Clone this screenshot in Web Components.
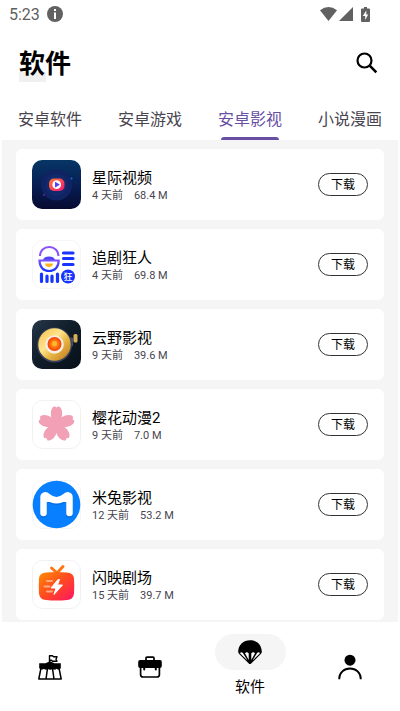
<!DOCTYPE html>
<html lang="zh-CN">
<head>
<meta charset="utf-8">
<meta name="viewport" content="width=device-width, initial-scale=1">
<title>软件</title>
<style>
    body {
        margin: 0;
        height: 100vh;
        display: flex;
        flex-direction: column;
        background: #fff;
        color: #000;
        font-family: Roboto, "Noto Sans CJK SC", sans-serif;
        --muted: #49454f;
        --accent: #6750a4;
        --surface: #f5f5f5;
    }
    main {
        flex: 1;
        min-height: 0;
        margin: 0 2px;
        padding: 9px 14px 0;
        display: flex;
        flex-direction: column;
        gap: 9px;
        overflow: hidden auto;
        scrollbar-width: none;
        background: var(--surface);
    }
</style>
</head>
<body>
<status-bar>5:23</status-bar>
<top-bar>软件</top-bar>
<tab-strip>
    <tab-item>安卓软件</tab-item>
    <tab-item>安卓游戏</tab-item>
    <tab-item active>安卓影视</tab-item>
    <tab-item>小说漫画</tab-item>
</tab-strip>
<main>
    <app-card age="4 天前" size="68.4 M">
        <svg slot="icon" viewBox="0 0 49 49">
            <defs>
                <linearGradient id="navy" x2="0" y2="1"><stop stop-color="#063665"/><stop offset=".5" stop-color="#071f55"/><stop offset="1" stop-color="#070a31"/></linearGradient>
                <linearGradient id="lens" x2="1" y2="1"><stop stop-color="#ff7a2d"/><stop offset="1" stop-color="#f51578"/></linearGradient>
            </defs>
            <rect width="49" height="49" rx="10" fill="url(#navy)"/>
            <circle cx="24.500" cy="25" r="15.500" fill="#102463"/>
            <circle cx="24.500" cy="25" r="11" fill="#12296c"/>
            <circle cx="39.500" cy="18.500" r="1" fill="#2469d8"/>
            <circle cx="12" cy="35" r="1.200" fill="#49208c"/>
            <rect x="17" y="18.500" width="15.500" height="12.500" rx="5" fill="url(#lens)"/>
            <circle cx="24.700" cy="24.700" r="4.400" fill="#fff"/>
            <path d="M23 22.300q0-.6.6-.3l3.700 2.200q.7.4 0 .8l-3.700 2.300q-.6.3-.6-.3z" fill="#5840f2"/>
        </svg>
        星际视频
    </app-card>
    <app-card age="4 天前" size="69.8 M">
        <svg slot="icon" viewBox="0 0 49 49">
            <defs><linearGradient id="hat" x2="0" y2="1"><stop stop-color="#7a50ff"/><stop offset="1" stop-color="#1834ff"/></linearGradient></defs>
            <rect x=".5" y=".5" width="48" height="48" rx="10" fill="#fff" stroke="#f5f5f5"/>
            <path d="M8 16c0-5.500 4-9 9.200-9s9.200 3.500 9.200 9" fill="none" stroke="#8a52ff" stroke-width="2"/>
            <path d="M11 20c.5-2.500 3-3.500 6-3.500s5.500 1 6 3.500z" fill="#5042f5"/>
            <path d="M7.500 20.500h19.200c0 6.500-4 10.500-9.600 10.500s-9.600-4-9.600-10.500z" fill="#fff" stroke="url(#hat)" stroke-width="2.200"/>
            <path d="M13 23.500h8q-.5 3.500-4 3.500t-4-3.500z" fill="#ffb21d"/>
            <path d="M31.500 13h9.500M31.500 18.500h9.500M31.500 24.500h9.500" fill="none" stroke="#1834ff" stroke-width="3.200" stroke-linecap="round"/>
            <path d="M9.500 34v7.500M15 36v5.500M20 36v5.500M25.500 34v7.500" fill="none" stroke="#1834ff" stroke-width="3.200" stroke-linecap="round"/>
            <circle cx="36" cy="36.500" r="7" fill="#1834ff"/>
            <text x="36" y="40" text-anchor="middle" font-size="9" font-weight="500" fill="#fff">狂</text>
        </svg>
        追剧狂人
    </app-card>
    <app-card age="9 天前" size="39.6 M">
        <svg slot="icon" viewBox="0 0 49 49">
            <defs>
                <linearGradient id="deck" x2="1" y2="1"><stop stop-color="#26384a"/><stop offset=".45" stop-color="#111d2a"/><stop offset="1" stop-color="#071019"/></linearGradient>
                <linearGradient id="gold" x2="1" y2="1"><stop stop-color="#f6be48"/><stop offset=".4" stop-color="#ffe58e"/><stop offset=".6" stop-color="#e8b746"/><stop offset="1" stop-color="#bd7418"/></linearGradient>
                <radialGradient id="ember"><stop stop-color="#ffb51a"/><stop offset=".5" stop-color="#ff780e"/><stop offset="1" stop-color="#f43c05"/></radialGradient>
            </defs>
            <rect width="49" height="49" rx="10" fill="url(#deck)"/>
            <path d="M36 17l5 1v8l-3 1" fill="#45526a"/>
            <circle cx="22.500" cy="25" r="17.500" fill="#37435c"/>
            <circle cx="22.500" cy="24.500" r="16.200" fill="url(#gold)"/>
            <circle cx="22.500" cy="24.500" r="9.300" fill="#f4eee5"/>
            <circle cx="22.500" cy="24" r="7" fill="url(#ember)"/>
            <rect x="20" y="21" width="5" height="5" rx="1.500" fill="#ffc03a" opacity=".7"/>
            <rect x="41.500" y="14" width="4" height="8.500" rx="1.500" fill="#d7ad58"/>
        </svg>
        云野影视
    </app-card>
    <app-card age="9 天前" size="7.0 M">
        <svg slot="icon" viewBox="0 0 49 49">
            <rect x=".5" y=".5" width="48" height="48" rx="10" fill="#fff" stroke="#f1f1f1"/>
            <defs><path id="petal" d="M24.500 27C20 21.500 17.500 15 19.500 9.500q1-2.600 3-3.200l2 1.300 2-1.300q2 .6 3 3.200C31.500 15 29 21.500 24.500 27z"/></defs>
            <g fill="#f1a0b6">
                <circle cx="24.500" cy="24.500" r="6"/>
                <use href="#petal"/>
                <use href="#petal" transform="rotate(72 24.500 24.500)"/>
                <use href="#petal" transform="rotate(144 24.500 24.500)"/>
                <use href="#petal" transform="rotate(216 24.500 24.500)"/>
                <use href="#petal" transform="rotate(288 24.500 24.500)"/>
            </g>
        </svg>
        樱花动漫2
    </app-card>
    <app-card age="12 天前" size="53.2 M">
        <svg slot="icon" viewBox="0 0 49 49">
            <rect x=".5" y=".5" width="48" height="48" rx="10" fill="#fff" stroke="#f5f5f5"/>
            <circle cx="24.500" cy="24.500" r="23.800" fill="#087fff"/>
            <path d="M11.500 33.500V18c0-3 2-3.300 4-1.500 6 5.500 12 5.500 18 0 2-1.800 4-1.500 4 1.500v15.500" fill="none" stroke="#0763c9" stroke-opacity=".55" stroke-width="7" stroke-linecap="round" stroke-linejoin="round" transform="translate(0 1)"/>
            <path d="M11.500 33V17.500c0-2.500 2-2.800 4-1 6 5 12 5 18 0 2-1.800 4-1.500 4 1V33" fill="none" stroke="#fff" stroke-width="6.500" stroke-linecap="round" stroke-linejoin="round"/>
            <path d="M14 17l4 4q6.500 3 13 0l4-4v5H14z" fill="#fff"/>
        </svg>
        米兔影视
    </app-card>
    <app-card age="15 天前" size="39.7 M">
        <svg slot="icon" viewBox="0 0 49 49">
            <defs><linearGradient id="tv" x2="1" y2="1"><stop stop-color="#ff8b00"/><stop offset=".5" stop-color="#ff4922"/><stop offset="1" stop-color="#ff1464"/></linearGradient></defs>
            <rect x=".5" y=".5" width="48" height="48" rx="10" fill="#fff" stroke="#f1f1f1"/>
            <path d="M19.500 8l5.500 5 6-6.500" fill="none" stroke="#ff7417" stroke-width="3" stroke-linecap="round"/>
            <path d="M14 12.500q10.500-1 21 0 6.500.5 7 6 .5 7.500 0 15-.5 6-7 6.500-10.500 1-21 0-6.500-.5-7-6.500-.5-7.500 0-15 .5-5.500 7-6z" fill="url(#tv)"/>
            <path d="M15 21h5M12.500 26.500h5M15 31.500h5" stroke="#ffab82" stroke-width="2" stroke-linecap="round"/>
            <path d="M26 19.500l-7 8.500h5l-2 6.500 8.500-9.500h-5l2-5.500z" fill="#fff" stroke="#fff" stroke-linejoin="round"/>
        </svg>
        闪映剧场
    </app-card>
</main>
<bottom-nav>
    <nav-item label="广场">
        <svg viewBox="0 0 24 24" fill="none" stroke="#000" stroke-width="1.500" stroke-linejoin="round">
            <path d="M11.500 7V.8h3l1 1h3.500l-1 2.400 1 2h-4.500l-1-1h-2" stroke-width="1.400"/>
            <path d="M1.200 8.200h6.300L12 6.200l4.500 2h6.300v5q-2 2.500-4 .5-2 2-4 .3-2.500 1.600-5 0-2 1.700-4-.3-2 2-4.600-.5z" fill="#000" stroke="none"/>
            <path d="M3 13L.8 24h22.400L21 13M9.500 13.500L8 24M14.500 13.500L16 24"/>
        </svg>
    </nav-item>
    <nav-item label="工具">
        <svg viewBox="0 0 24 24" fill="none" stroke="#000" stroke-width="1.700">
            <path d="M8 5V3.200q0-1 1-1h6q1 0 1 1V5"/>
            <path d="M2 5h20q1.800 0 1.800 2v4q0 2-2 2h-3v1.500q0 1-1 1t-1-1V13H7.200v1.500q0 1-1 1t-1-1V13h-3q-2 0-2-2V7Q.2 5 2 5z" fill="#000" stroke="none"/>
            <path d="M2.600 12v7.500q0 2.500 2.500 2.500h13.800q2.500 0 2.500-2.500V12"/>
        </svg>
    </nav-item>
    <nav-item label="软件" active>
        <svg viewBox="0 0 24 24">
            <path d="M.2 11.500C.5 4.500 5.500.2 12 .2s11.500 4.300 11.800 11.300q0 1.500-1 2.500L12.700 24h-1.400L1.200 14q-1-1-1-2.500z"/>
            <path d="M2.200 12.800q1.300-1 2.700.2L9.500 20.500 2.200 13.600zM7 13.200q1.700-1.700 3.700 0V20zM17 13.200q-1.700-1.700-3.700 0V20zM21.800 12.800q-1.300-1-2.700.2L14.500 20.500l7.300-6.900z" fill="#fff"/>
        </svg>
    </nav-item>
    <nav-item label="我的">
        <svg viewBox="0 0 24 24">
            <circle cx="12" cy="5.200" r="5.500"/>
            <path d="M1.200 24.200c0-6.500 4.800-10.700 10.800-10.700s10.800 4.200 10.800 10.700" fill="none" stroke="#000" stroke-width="1.900"/>
        </svg>
    </nav-item>
</bottom-nav>

<script>
class BaseElement extends HTMLElement {
    constructor() {
        super();
        this.attachShadow({ mode: "open" }).innerHTML = this.template();
    }
}

customElements.define("status-bar", class extends BaseElement {
    template() {
        return `
        <style>
            :host { display: flex; align-items: center; gap: 7px; height: 28px; flex: none; box-sizing: border-box; padding: 0 30px 0 9px; color: #5f5f5f; font-size: 16px; }
            svg { display: block; fill: #616161; }
            .system { margin-left: auto; display: flex; align-items: center; gap: 2px; }
            .battery { margin-left: 6px; }
        </style>
        <slot></slot>
        <svg width="16" height="16" viewBox="0 0 16 16"><circle cx="8" cy="8" r="8"/><path d="M7 3h2v2H7zM7 6.500h2V13H7z" fill="#fff"/></svg>
        <div class="system">
            <svg width="17" height="14" viewBox="0 0 17 14"><path d="M0 3.200Q8.500-3.200 17 3.200L8.500 14z"/></svg>
            <svg width="14" height="14" viewBox="0 0 14 14"><path d="M14 0v14H0z"/></svg>
            <svg class="battery" width="9" height="15" viewBox="0 0 9 15"><path d="M3 0h3v1.500h2q1 0 1 1V14q0 1-1 1H1q-1 0-1-1V2.500q0-1 1-1h2z"/><path d="M5.300 3.500L1.800 9h2.400v4l3-5.500H5.300z" fill="#fff"/></svg>
        </div>`;
    }
});

customElements.define("top-bar", class extends BaseElement {
    template() {
        return `
        <style>
            :host { display: flex; align-items: center; justify-content: space-between; height: 72px; flex: none; box-sizing: border-box; padding: 0 20px 0 19px; }
            h1 { margin: 0; font-size: 26px; line-height: 36px; font-weight: 700; background: linear-gradient(#f0f0f0, #f0f0f0) left bottom / 27px 10px no-repeat; }
            button { display: flex; padding: 0 0 2px; border: 0; background: none; }
        </style>
        <h1><slot></slot></h1>
        <button aria-label="搜索"><svg width="26" height="26" viewBox="0 0 26 26" fill="none" stroke="#000"><circle cx="10.500" cy="10.500" r="7" stroke-width="2.200"/><path d="M15.700 15.700l6.600 6.600" stroke-width="2.600"/></svg></button>`;
    }
});

customElements.define("tab-strip", class extends BaseElement {
    template() {
        return `
        <style>
            :host { display: grid; grid-template-columns: repeat(4, 1fr); height: 40px; flex: none; }
        </style>
        <slot></slot>`;
    }
});

customElements.define("tab-item", class extends BaseElement {
    template() {
        return `
        <style>
            :host { display: flex; justify-content: center; color: var(--muted); }
            :host([active]) { color: var(--accent); }
            button { display: flex; flex-direction: column; align-items: center; justify-content: space-between; padding: 8px 0 0; border: 0; background: none; color: inherit; font: inherit; font-size: 16px; line-height: 24px; white-space: nowrap; }
            i { display: none; width: 58px; height: 3px; border-radius: 3px 3px 0 0; background: var(--accent); }
            :host([active]) i { display: block; }
        </style>
        <button><span><slot></slot></span><i></i></button>`;
    }
});

customElements.define("app-card", class extends BaseElement {
    template() {
        return `
        <style>
            :host { display: flex; align-items: center; gap: 11px; flex: none; padding: 11px 16px; border-radius: 6px; background: #fff; }
            ::slotted(svg) { display: block; width: 49px; height: 49px; flex: none; }
            .info { flex: 1; min-width: 0; padding-top: 2px; }
            h2 { margin: 0; font-size: 15px; line-height: 20px; font-weight: 400; }
            p { margin: 0; display: flex; gap: 11px; font-size: 11px; line-height: 16px; color: var(--muted); }
            button { padding: 2px 12px 0; border: 1px solid #333; border-radius: 12px; background: none; color: #000; font: inherit; font-size: 12px; line-height: 19px; }
        </style>
        <slot name="icon"></slot>
        <div class="info">
            <h2><slot></slot></h2>
            <p><span class="age"></span><span class="size"></span></p>
        </div>
        <button>下载</button>`;
    }

    connectedCallback() {
        this.shadowRoot.querySelector(".age").textContent = this.getAttribute("age");
        this.shadowRoot.querySelector(".size").textContent = this.getAttribute("size");
    }
});

customElements.define("bottom-nav", class extends BaseElement {
    template() {
        return `
        <style>
            :host { display: block; flex: none; background: #fff; }
            nav { display: grid; grid-template-columns: repeat(4, 1fr); height: 89px; }
        </style>
        <nav><slot></slot></nav>`;
    }
});

customElements.define("nav-item", class extends BaseElement {
    template() {
        return `
        <style>
            :host { display: flex; align-items: center; justify-content: center; }
            button { display: flex; flex-direction: column; align-items: center; gap: 5px; padding: 0; border: 0; background: none; color: #000; font: inherit; font-size: 15px; line-height: 24px; }
            .pill { display: flex; align-items: center; justify-content: center; width: 71px; height: 36px; border-radius: 18px; }
            :host([active]) .pill { background: var(--surface); }
            ::slotted(svg) { display: block; width: 24px; height: 24px; overflow: visible; }
        </style>
        <button><span class="pill"><slot></slot></span></button>`;
    }

    // only the current section shows its label
    connectedCallback() {
        const button = this.shadowRoot.querySelector("button");
        const label = this.getAttribute("label");
        button.setAttribute("aria-label", label);
        if (this.hasAttribute("active")) {
            const text = document.createElement("span");
            text.textContent = label;
            button.append(text);
        }
    }
});
</script>
</body>
</html>
